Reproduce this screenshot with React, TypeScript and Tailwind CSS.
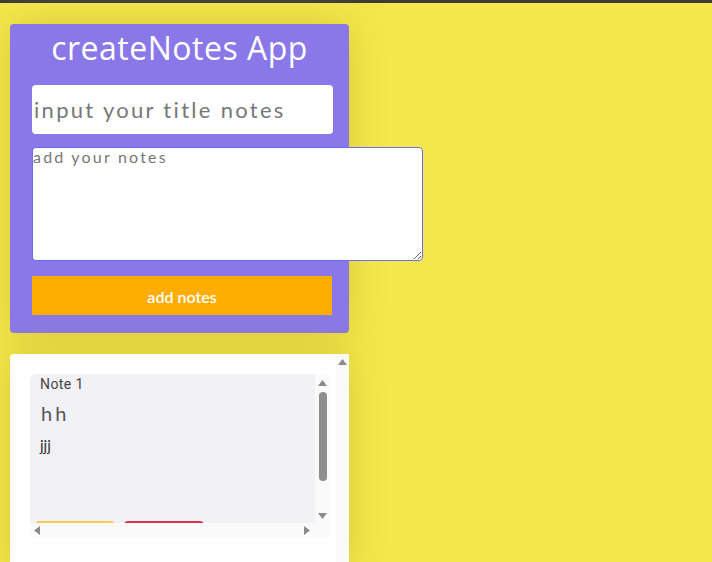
import React from 'react';

const UpArrow = ({ className = '' }: { className?: string }) => (
  <svg width="9" height="6" viewBox="0 0 9 6" className={className}>
    <path d="M4.5 0 L9 6 L0 6 Z" fill="#8a8a8a" />
  </svg>
);

const DownArrow = ({ className = '' }: { className?: string }) => (
  <svg width="9" height="6" viewBox="0 0 9 6" className={className}>
    <path d="M0 0 L9 0 L4.5 6 Z" fill="#8a8a8a" />
  </svg>
);

const SideArrow = ({ dir }: { dir: 'left' | 'right' }) => (
  <svg width="6" height="9" viewBox="0 0 6 9">
    <path d={dir === 'left' ? 'M6 0 L6 9 L0 4.5 Z' : 'M0 0 L6 4.5 L0 9 Z'} fill="#8a8a8a" />
  </svg>
);

const NoteCard = () => (
  <div className="w-[300px] h-[164px] flex flex-col">
    <div className="flex h-[149px]">
      {/* note body, cut off by the scroll box */}
      <div className="w-[285px] bg-[#f2f1f6] rounded-tl-[6px] overflow-hidden flex flex-col px-[10px] pt-[1px] relative">
        <p className="text-[14px] text-[#444] font-normal leading-[18px] tracking-[0.4px]" style={{ fontFamily: 'Roboto, sans-serif' }}>Note 1</p>
        <p className="text-[20px] text-[#555] tracking-[3px] mt-[8px] leading-[24px] ml-[1px]" style={{ fontFamily: 'Lato, sans-serif' }}>hh</p>
        <p className="text-[15px] text-[#333] mt-[11px] leading-[18px]" style={{ fontFamily: 'Lato, sans-serif' }}>jjj</p>
        <div className="absolute left-[5px] top-[147px] flex gap-[9px]">
          <div className="w-[80px] h-[10px] rounded-[4px] bg-[#f2cd4f]" />
          <div className="w-[80px] h-[10px] rounded-[4px] bg-[#e3304a]" />
        </div>
      </div>
      {/* vertical scrollbar */}
      <div className="w-[15px] bg-[#fafafa] flex flex-col items-center pt-[6px] pb-[4px]">
        <UpArrow />
        <div className="w-[8px] h-[89px] mt-[6px] rounded-full bg-[#8e8e8e]" />
        <div className="flex-1" />
        <DownArrow />
      </div>
    </div>
    {/* horizontal scrollbar */}
    <div className="h-[15px] bg-[#fafafa] flex items-center justify-between pl-[4px] pr-[20px]">
      <SideArrow dir="left" />
      <SideArrow dir="right" />
    </div>
  </div>
);

export default function App() {
  const quick = { fontFamily: 'Lato, "Open Sans", sans-serif' };
  return (
    <div className="min-h-screen h-[562px] overflow-hidden bg-[#f5e84b] flex flex-col" style={quick}>
      <div className="h-[3px] bg-[#3b3b3b] shrink-0" />
      <div className="flex flex-col gap-[21px] pl-[10px] pt-[21px]">
        <div className="w-[339px] h-[309px] bg-[#8a78e8] rounded-[4px] shadow-[0_0_40px_rgba(180,160,40,0.45)] flex flex-col pl-[22px] pt-[4px]">
          <h1 className="text-[32px] text-white leading-[40px] text-center pr-[22px] tracking-[0.5px]" style={{ fontFamily: '"Open Sans", sans-serif' }}>createNotes App</h1>
          <input
            placeholder="input your title notes"
            className="mt-[17px] w-[301px] h-[49px] bg-white rounded-[4px] text-[22px] tracking-[2.3px] pl-[2px] placeholder:text-[#777] outline-none"
          />
          <textarea
            placeholder="add your notes"
            className="mt-[13px] w-[391px] h-[114px] bg-white rounded-[4px] border border-[#6c6cf0] text-[16px] tracking-[2.2px] leading-[18px] placeholder:text-[#777] resize-y outline-none"
          />
          <button className="mt-[15px] w-[300px] h-[39px] bg-[#ffad00] text-white text-[16px] font-semibold pt-[2px]">add notes</button>
        </div>
        <div className="w-[339px] h-[220px] bg-white rounded-t-[4px] shadow-[0_0_40px_rgba(180,160,40,0.45)] flex">
          <div className="flex-1 pl-[20px] pt-[20px]">
            <NoteCard />
          </div>
          <div className="w-[13px] bg-[#fafafa] flex flex-col items-center pt-[5px]">
            <UpArrow />
          </div>
        </div>
      </div>
    </div>
  );
}
